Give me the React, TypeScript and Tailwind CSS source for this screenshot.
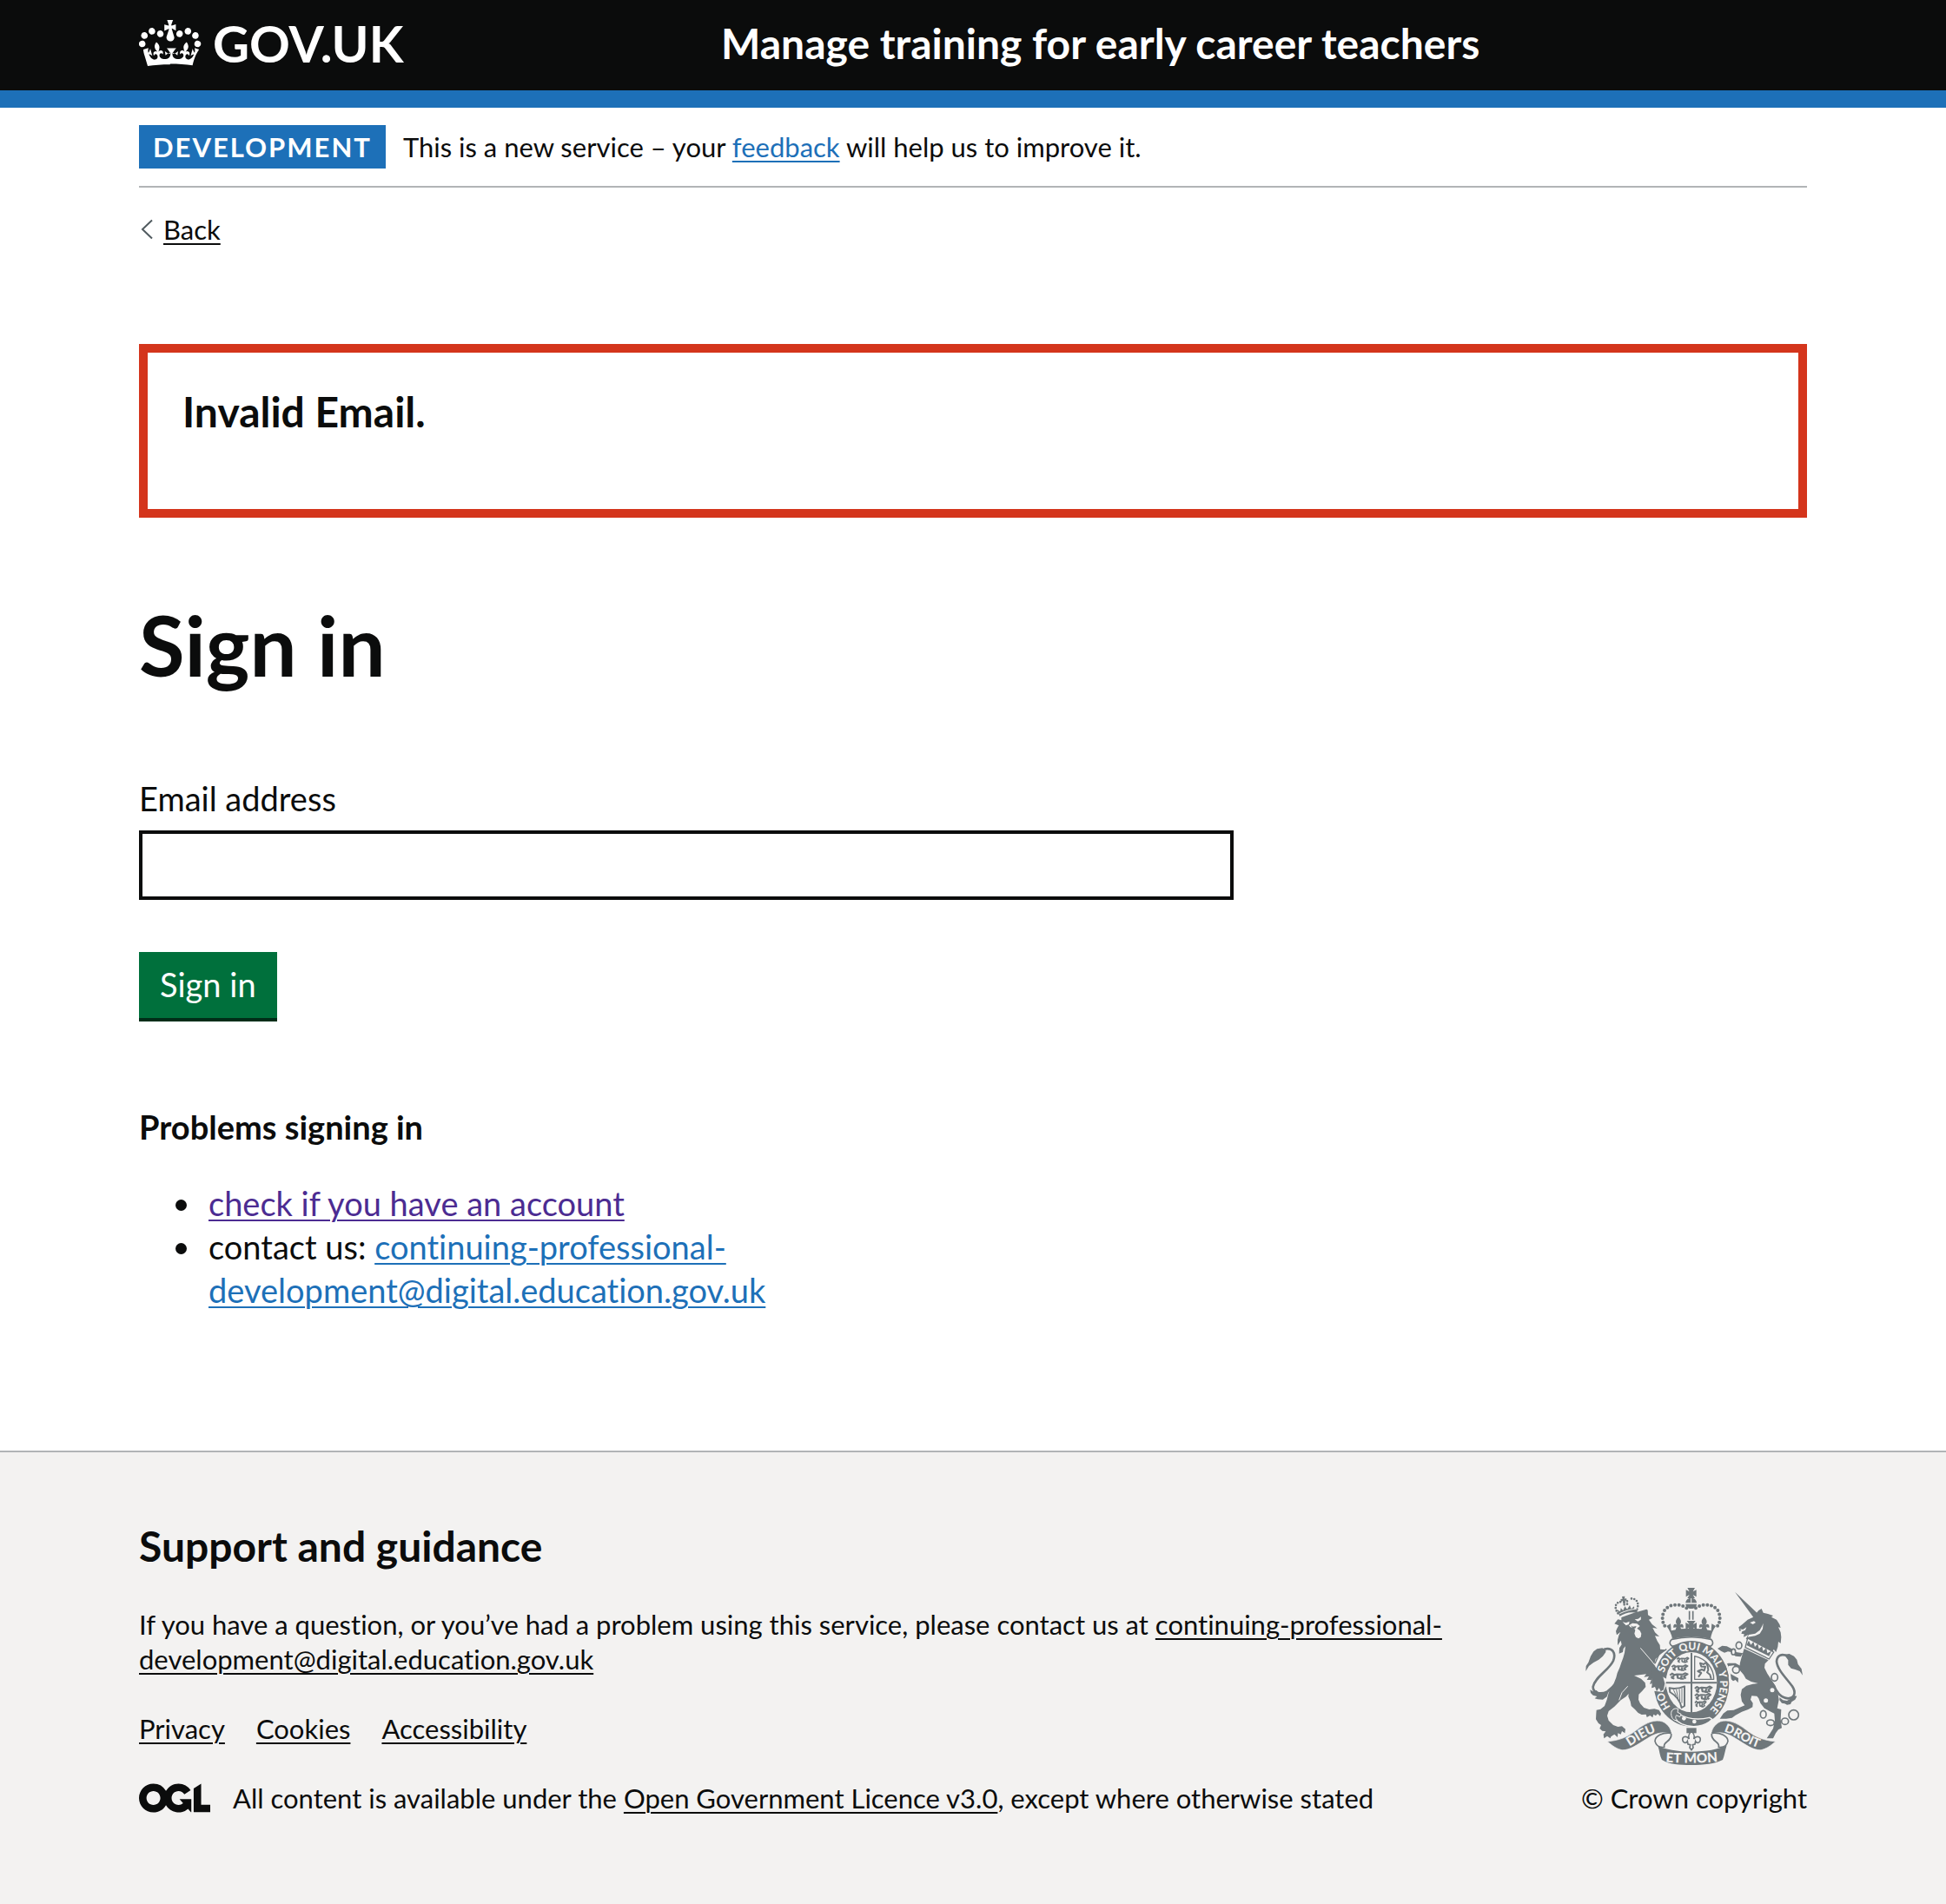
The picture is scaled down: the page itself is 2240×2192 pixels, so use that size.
import type { ReactNode } from "react";

const LINK = "underline decoration-2 underline-offset-4";

function Crown() {
  return (
    <svg aria-hidden="true" className="h-[54px] w-[72px] shrink-0" viewBox="0 4 36 27" fill="currentColor">
      <path d="M6.7 12.2c1 .4 2.1-.1 2.5-1s-.1-2.1-1-2.5c-1-.4-2.1.1-2.5 1-.4 1 0 2.1 1 2.5m-4.3 2.5c1 .4 2.1-.1 2.5-1s-.1-2.1-1-2.5c-1-.4-2.1.1-2.5 1-.5 1 0 2.1 1 2.5m-1.3 4.8c1 .4 2.1-.1 2.5-1 .4-1-.1-2.1-1-2.5-1-.4-2.1.1-2.5 1-.4 1 0 2.1 1 2.5m10.4-5.8c1 .4 2.1-.1 2.5-1s-.1-2.1-1-2.5-2.1.1-2.5 1c-.4 1 .1 2.1 1 2.5m17.4-1.5c-1 .4-2.1-.1-2.5-1s.1-2.1 1-2.5c1-.4 2.1.1 2.5 1s0 2.1-1 2.5m4.3 2.5c-1 .4-2.1-.1-2.5-1s.1-2.1 1-2.5c1-.4 2.1.1 2.5 1s0 2.1-1 2.5m1.3 4.8c-1 .4-2.1-.1-2.5-1s.1-2.1 1-2.5 2.1.1 2.5 1c.4 1 0 2.1-1 2.5m-10.4-5.8c-1 .4-2.1-.1-2.5-1s.1-2.1 1-2.5c1-.4 2.1.1 2.5 1s-.1 2.1-1 2.5m-5.3-4.9 2.4 1.3V6.5l-2.4.8c-.1-.1-.1-.2-.2-.3s1-3 1-3h-3.4s1 2.9 1 3-.2.2-.2.3l-2.4-.7v3.6L17 9.1c.1.1.2.2.3.2l-1.4 4.2c-.1.2-.1.4-.1.6 0 1.1.8 2 1.9 2.2h.7c1-.2 1.9-1.1 1.9-2.1 0-.2 0-.4-.1-.6l-1.3-4.3c-.1-.2 0-.3.1-.4m-1 20.3c4.6 0 8.9.3 12.8.9 1.1-4.6 2.4-7.2 3.8-9.1l-2.6-.9c.3 1.3.3 1.9 0 2.8-.4-.4-.8-1.2-1.1-2.4l-1.2 4.2c.8-.5 1.4-.9 2-.9-1.1 2.5-2.7 3.1-3.5 3-1.1-.2-1.7-1.2-1.5-2.1.3-1.2 1.5-1.5 2.1-.1 1.1-2.3-.8-3-2-2.3 1.9-1.9 2.1-3.5.6-5.6-2.1 1.6-2.1 3.2-1.2 5.5-1.2-1.4-3.2-.6-2.5 1.6.9-1.4 2.1-.5 1.9.8-.2 1.1-1.7 2.1-3.5 1.9-2.7-.2-2.9-2.1-2.9-3.6.7-.1 1.9.5 2.9 1.5l.4-2.4c-1.1 1.1-2.1 1.4-3.2 1.4.4-1.2 2.1-3.1 2.1-3.1h-5.4s1.7 1.9 2.1 3.1c-1.1 0-2.1-.3-3.2-1.4l.4 2.4c1-1 2.2-1.6 2.9-1.5-.1 1.5-.2 3.4-2.9 3.6-1.9.2-3.4-.8-3.5-1.9-.2-1.3 1-2.2 1.9-.8.7-2.3-1.2-3-2.5-1.6.9-2.2.9-3.9-1.2-5.5-1.5 2-1.3 3.7.6 5.6-1.2-.7-3.1 0-2 2.3.6-1.4 1.8-1.1 2.1.1.2.9-.3 1.9-1.5 2.1-.9.2-2.4-.5-3.5-3 .6 0 1.2.3 2 .9l-1.2-4.2c-.3 1.1-.7 1.9-1.1 2.4-.3-.8-.2-1.4 0-2.8l-2.9.9C2.5 23.2 3.8 25.8 5 30.5c3.9-.6 8.1-.9 12.8-.9" />
    </svg>
  );
}

function OglLogo() {
  return (
    <svg role="img" aria-label="Open Government Licence" className="mr-[26px] h-[34px] w-[82px] shrink-0" viewBox="0 0 483.2 195.7" fill="currentColor">
      <path d="M421.5 142.8V.1l-50.7 32.3v161.1h112.4v-50.7zm-122.3-9.6A47.12 47.12 0 0 1 221 97.8c0-26 21.1-47.1 47.1-47.1 16.7 0 31.4 8.7 39.7 21.8l42.7-27.2A97.63 97.63 0 0 0 268.1 0c-36.5 0-68.3 20.1-85.1 49.7A98 98 0 0 0 97.8 0C43.9 0 0 43.9 0 97.8s43.9 97.8 97.8 97.8c36.5 0 68.3-20.1 85.1-49.7a97.76 97.76 0 0 0 149.6 25.4l19.4 22.2h3v-87.8h-80l24.3 27.5zM97.8 145c-26 0-47.1-21.1-47.1-47.1s21.1-47.1 47.1-47.1 47.1 21.1 47.1 47.1S123.8 145 97.8 145" />
    </svg>
  );
}

const PASSANT = "M0 5L5 0l5 4 6-2 13 1 6-4 5 3-5 4-3 3 4 6M9 5l-4 8 5 2M17 5l1 8 6 1M27 6l-2 9 7 0M2 9l4 2";

/* Royal coat of arms: supporters, crown, garter and motto scroll. */
function Crest() {
  const g = "#6f777b";
  const p = "#f3f2f1";
  const words: [string, string][] = [
    ["HO", "16.5%"],
    ["SOIT", "36.5%"],
    ["QUI", "49%"],
    ["MAL", "61%"],
    ["Y", "70.5%"],
    ["PENSE", "81.5%"],
  ];
  return (
    <svg role="img" aria-label="Royal coat of arms" className="h-[204px] w-[250px]" viewBox="72 54 750 612" fill={g}>
      {/* Lion */}
      <path d="M172 178L184 163 196 166 196 156 240 140 283 128 287 131 288 148 304 158 291 164 302 180 320 194 304 192 312 208 327 222 312 220 320 238 329 252 330 266 347 268 330 284 314 300 310 318 328 338 342 358 348 380 342 406 332 412 326 400 316 412 311 396 300 400 304 384 294 386 299 372 284 372 291 360 274 362 282 352 240 357 264 368 278 382 280 396 268 410 256 422 255 440 261 454 274 468 292 474 310 472 326 476 333 488 330 497 321 489 315 496 307 491 304 502 295 495 284 501 281 491 266 492 254 486 243 474 230 462 227 446 220 430 221 420 212 430 194 442 172 464 152 480 147 496 152 512 168 528 184 534 198 532 210 542 208 556 198 549 194 560 184 556 183 570 172 560 160 568 158 574 147 566 136 574 134 560 142 550 130 548 121 540 126 528 117 522 108 508 109 488 110 476 124 473 138 462 146 440 152 416 160 398 170 384 178 364 182 348 190 330 196 312 202 296 207 278 210 256 203 264 201 276 188 281 189 262 197 250 194 236 183 253 183 234 187 218 193 206 180 217 177 204 181 194 187 184Z" />
      <path d="M218 394l-20 22-10 26M262 262L300 306 330 346" stroke={p} strokeWidth="3" fill="none" />
      <path d="M200 172l12 3 12-5-2 10-10 4zM242 163l12-2 10-7-1 10-10 6zM222 184l12-8 16 2 10 8-10 8 10 8 5 10-2 12-8 5-9-5-5-12 3-12-5-8-12-2z" fill={p} />
      <path d="M228 184l8 4 12-2-4 8-8 0z" />
      <path d="M73 342L74 324 82 312 90 290 100 274 112 265 130 262 142 268 142 276 132 290 118 302 100 312 84 324Z" />
      <path d="M136 266C166 258 178 280 168 306 154 338 104 362 98 396 98 418 124 424 148 412L184 380" stroke={g} strokeWidth="8" fill="none" />
      <path d="M88 406l10 6 12-4 12 12 16-2 14-6-6 18-14 10-18-1-10-3 8-7-14-4-8-8z" />
      {/* Lion's crown */}
      <path d="M184 142C168 118 178 102 198 102M250 128C260 102 244 88 226 92M206 102v18M216 100v18" stroke={g} strokeWidth="8" strokeDasharray="0 10" strokeLinecap="round" fill="none" />
      <path d="M198 84l10-1-1 9 6-2 2 9-7-1 2 9-8 2-1-10-6 3-2-9 7-1zM190 152l-8-22 10 6 2-12 8 8 6-14 8 10 9-14 5 13 10-9 1 12 10-6 0 18C230 134 208 142 190 152z" />
      <path d="M190 143C208 134 230 128 250 126" stroke={p} strokeWidth="3" fill="none" />
      {/* Unicorn */}
      <path d="M588 68L672 148 652 156Z" />
      <path d="M670 132L680 126 686 140 702 144 720 150 714 155 732 164 742 180 746 192 738 190 746 208 748 224 746 246 738 240 736 258 730 276 722 266 716 282 626 230 634 216 618 224 620 214 610 212 616 198 604 204 601 190 614 180 632 164 650 156Z" />
      <path d="M640 174l14-5 6 5-10 6zM686 176l-2 20-10 16-16 8-26 4 4-8 22-4 16-12 8-14z" fill={p} />
      <path d="M604 196l12 2 12-8-4 10-10 4z" fill={p} />
      <path d="M632 228L722 276 706 300 624 260Z" fill={p} stroke={g} strokeWidth="4" />
      <path d="M628 252L636 236 643 251 652 240 657 258 667 247 671 265 682 255 685 272 697 262 700 280 714 272 706 290Z" />
      <path d="M620 264L704 304 692 316 690 330 700 350 716 374 728 392 736 416 740 440 734 470 748 474 746 508 750 538 738 544 729 556 720 574 698 574 710 556 720 540 726 512 724 488 708 480 690 470 676 452 670 436 664 428 646 427 642 440 650 452 649 466 634 474 612 482 590 494 578 503 558 506 536 506 548 488 562 478 584 476 622 460 612 446 608 424 612 404 628 392 650 386 668 384 644 378 626 368 618 354 608 342 604 328 606 312 612 290Z" />
      <path d="M608 292L590 290 576 276 564 274 552 278 540 272 528 264 544 254 560 256 576 264 592 276 616 280ZM612 344L598 332 584 322 566 324 562 338 574 352 600 366 599 382 590 372 582 376 562 358 546 338 550 320 566 314 590 314 612 326Z" />
      <path d="M716 384C734 412 742 434 772 436 798 434 798 412 786 394 764 364 734 336 732 308 734 286 750 280 770 290" stroke={g} strokeWidth="8" fill="none" />
      <path d="M758 284L776 282 792 290 802 302 806 318 818 334 822 356 812 342 796 336 782 332 772 320 772 304ZM742 432l12 10 14 2 10-6 12-12 12 2-6 12-12 8-4 8-12 2-8-4-10-2-8-10z" />
      <g fill={p} stroke={g} strokeWidth="5">
        <ellipse cx="602" cy="253" rx="10" ry="12" />
        <ellipse cx="583" cy="275" rx="7" ry="10" />
        <ellipse cx="592" cy="337" rx="12" ry="12" />
        <ellipse cx="725" cy="363" rx="11" ry="13" />
        <ellipse cx="717" cy="407" rx="10" ry="10" />
        <ellipse cx="695" cy="443" rx="10" ry="10" />
        <ellipse cx="686" cy="491" rx="10" ry="13" />
        <ellipse cx="711" cy="520" rx="13" ry="10" />
        <ellipse cx="761" cy="515" rx="12" ry="11" />
        <circle cx="791" cy="493" r="17" />
      </g>
      {/* Crown */}
      <path d="M424 54h26l-7 13 12-6v24l-12-7 7 12h-26l7-12-12 7V61l12 6zM418 106c0-10 8-17 19-17s19 7 19 17z" />
      <path d="M418 110h38c0 10-8 16-19 16s-19-6-19-16z" />
      <path d="M437 90v16" stroke={p} strokeWidth="3" />
      <path d="M421 124C396 106 358 110 344 134 334 154 336 176 352 194M453 124C478 106 516 110 530 134 540 154 538 176 522 194" stroke={g} strokeWidth="12" strokeDasharray="0 14" strokeLinecap="round" fill="none" />
      <path d="M431 134v30M443 134v30" stroke={g} strokeWidth="5" />
      <path d="M422 168h30l-9 13 13-7v24l-12-7 6 12h-26l6-12-12 7v-24l13 7zM393 154c12 14 10 20 5 28 8-6 14 0 12 10l-10-2 4 12h-22l4-12-10 2c-2-10 4-16 12-10-5-8-7-14 5-28zM482 154c12 14 10 20 5 28 8-6 14 0 12 10l-10-2 4 12h-22l4-12-10 2c-2-10 4-16 12-10-5-8-7-14 5-28z" />
      <path d="M352 186l14-8 2 24c46-10 92-10 138 0l2-24 14 8c-10 14-16 30-18 44-44-10-88-10-132 0-2-14-10-30-20-44z" />
      <path d="M370 232C360 240 362 250 372 256 414 242 462 242 504 256 514 250 514 240 506 232 462 222 414 222 370 232Z" fill={p} stroke={g} strokeWidth="5" />
      {/* Garter */}
      <path d="M370 262C326 288 304 334 306 392M506 262C550 288 574 334 572 392" stroke={p} strokeWidth="8" fill="none" />
      <path d="M352 266L326 284 312 316" stroke={g} strokeWidth="4" fill="none" />
      <ellipse cx="438" cy="385" rx="130" ry="148" />
      <ellipse cx="438" cy="380" rx="88" ry="104" fill={p} />
      <path id="garter-line" d="M438 502A99 117 0 0 1 438 268A99 117 0 0 1 438 502" fill="none" />
      <g fill={p} fontFamily="Lato, sans-serif" fontWeight="900" fontSize="36" textAnchor="middle">
        {words.map(([word, at]) => (
          <text key={word}>
            <textPath href="#garter-line" startOffset={at}>{word}</textPath>
          </text>
        ))}
      </g>
      <path d="M302 388l30-30 20 10-2 26-10 20-32-4z" fill={p} />
      <path d="M300 312L312 324 326 344 340 362 346 384 342 406 332 412 326 400 318 412 312 396 302 400Z" />
      {/* Shield quarters */}
      <path d="M350 382h176M438 278v208" stroke={g} strokeWidth="6" fill="none" />
      <g fill="none" stroke={g} strokeWidth="5" strokeLinejoin="round">
        <path d={PASSANT} transform="translate(388 296)" />
        <path d={PASSANT} transform="translate(370 322) scale(1.35 1.1)" />
        <path d={PASSANT} transform="translate(364 350) scale(1.5 1.2)" />
        <path d={PASSANT} transform="translate(450 396) scale(1.45 1.2)" />
        <path d={PASSANT} transform="translate(450 421) scale(1.35 1.2)" />
        <path d={PASSANT} transform="translate(450 446) scale(.95 1.2)" />
        <path d="M449 290v80h66C516 336 492 300 449 290z" strokeWidth="4" />
        <path d="M462 362l10-14-12-6 14-6 8 4 4-14-14 0-4-12 12 4 8-6 6 12 2 14-4 8 10 8 4 14" strokeWidth="6" />
        <path d="M362 400c16 4 34 2 52-6v68l-10 6c-4-22-20-42-40-54z" strokeWidth="6" />
        <path d="M376 406l10 22M386 405l6 32M396 403l2 42M405 400v52" strokeWidth="3" />
      </g>
      {/* Buckle and belt end */}
      <path d="M388 486C420 506 460 512 500 502L510 508C484 534 440 540 404 524L376 506Z" stroke={p} strokeWidth="4" />
      <circle cx="412" cy="505" r="7" fill={p} />
      <circle cx="448" cy="516" r="7" fill={p} />
      <path d="M392 472c-14-4-24 4-24 16s6 26 22 24c-8-6-8-12-4-18l12 6 4-10-12-6z" stroke={p} strokeWidth="3" />
      {/* Motto scroll */}
      <path d="M148 585C190 580 214 572 250 544 284 518 312 508 338 516 360 526 368 544 370 560 350 550 318 552 286 574 250 596 224 616 198 614 180 610 168 602 148 585Z" stroke={p} strokeWidth="2" />
      <path d="M728 585C686 580 662 572 626 544 592 518 564 508 538 516 516 526 508 544 506 560 526 550 558 552 590 574 626 596 652 616 678 614 696 610 708 602 728 585Z" stroke={p} strokeWidth="2" />
      <path d="M368 556C338 552 312 566 312 584 316 600 328 606 344 604 338 584 372 586 368 558M508 556C538 552 564 566 564 584 560 600 548 606 532 604 538 584 504 586 508 558" stroke={g} strokeWidth="5" fill={p} />
      <path d="M322 600C346 612 390 620 438 620S534 612 560 598C554 616 552 634 546 648 520 662 480 666 438 666S360 664 336 648C328 634 328 616 322 600Z" />
      <path id="motto-left" d="M212 607C242 594 272 564 330 548" fill="none" />
      <path id="motto-centre" d="M330 654Q438 664 548 652" fill="none" />
      <path id="motto-right" d="M546 550C592 560 620 592 672 607" fill="none" />
      <g fill={p} fontFamily="Lato, sans-serif" fontWeight="900" textAnchor="middle">
        <text fontSize="44"><textPath href="#motto-left" startOffset="50%">DIEU</textPath></text>
        <text fontSize="46"><textPath href="#motto-centre" startOffset="50%">ET MON</textPath></text>
        <text fontSize="42"><textPath href="#motto-right" startOffset="50%">DROIT</textPath></text>
      </g>
      <path d="M421 538h34v18h-34z" />
      <path d="M438 548c10 12 12 18 8 28 10-14 26-8 22 6-2 8-12 10-16 2l-2 10-8 2 2 10-6 8-6-8 2-10-8-2-2-10c-4 8-14 6-16-2-4-14 12-20 22-6-4-10-2-16 8-28z" fill={p} stroke={g} strokeWidth="5" />
    </svg>
  );
}

function FooterLink({ children }: { children: ReactNode }) {
  return <a href="#" className={LINK}>{children}</a>;
}

export default function App() {
  return (
    <div className="flex min-h-screen flex-col bg-white font-['Lato',sans-serif] text-[31px] leading-10 text-[#0b0c0c] [font-variant-ligatures:none]">
      <header className="border-b-20 border-[#1d70b8] bg-[#0b0c0c] px-40 text-white">
        <div className="flex items-center pt-[23px] pb-[27px]">
          <div className="mr-[30px] w-1/3">
            <a href="#" className="flex items-center gap-[13px] text-[58px] leading-10 font-bold">
              <Crown />
              GOV.UK
            </a>
          </div>
          <a href="#" className="text-5xl leading-10 font-bold">Manage training for early career teachers</a>
        </div>
      </header>

      <div className="px-40">
        <div className="flex items-center gap-5 border-b-2 border-[#b1b4b6] py-5 leading-[50px]">
          <strong className="bg-[#1d70b8] px-4 font-bold tracking-[2px] text-white">DEVELOPMENT</strong>
          <p>
            This is a new service – your <a href="#" className={`${LINK} text-[#1d70b8]`}>feedback</a> will help us to improve it.
          </p>
        </div>
        <a href="#" className="mt-7 flex w-fit items-center">
          <svg aria-hidden="true" className="mr-2 h-6 w-5" viewBox="0 0 20 24" fill="none" stroke="#505a5f" strokeWidth="2">
            <path d="M15 1.500L4 12l11 10.500" />
          </svg>
          <span className={LINK}>Back</span>
        </a>
      </div>

      <main className="px-40 pt-28 pb-40 text-[38px] leading-[50px]">
        <div role="alert" className="border-10 border-[#d4351c] p-10">
          <h2 className="mb-11 text-5xl leading-14 font-bold">Invalid Email.</h2>
        </div>
        <h1 className="mt-24 text-8xl leading-[100px] font-bold">Sign in</h1>
        <form className="mt-[102px] w-2/3 pr-5">
          <label htmlFor="email" className="block">Email address</label>
          <input id="email" type="email" className="mt-3 block h-20 w-full border-4 border-[#0b0c0c] px-2" />
          <button type="button" className="mt-15 block bg-[#00703c] px-6 pt-3 pb-3.5 text-white shadow-[0_4px_0_#002d18]">Sign in</button>
        </form>
        <section className="mt-25 w-1/2 pr-8">
          <h3 className="font-bold">Problems signing in</h3>
          <ul className="mt-[38px] list-disc pl-[74px]">
            <li className="pl-1.5"><a href="#" className={`${LINK} text-[#4c2c92]`}>check if you have an account</a></li>
            <li className="pl-1.5">contact us: <a href="#" className={`${LINK} text-[#1d70b8]`}>continuing-professional-<wbr />development@digital.education.gov.uk</a></li>
          </ul>
        </section>
      </main>

      <footer className="grow border-t-2 border-[#b1b4b6] bg-[#f3f2f1] px-40 pt-[78px] pb-25">
        <div className="flex items-end justify-between gap-15">
          <div className="min-w-0 flex-1">
            <h2 className="text-5xl leading-15 font-bold">Support and guidance</h2>
            <p className="mt-10">
              If you have a question, or you’ve had a problem using this service, please contact us at{" "}
              <FooterLink>continuing-professional-<wbr />development@digital.education.gov.uk</FooterLink>
            </p>
            <ul className="mt-10 flex gap-9">
              <li><FooterLink>Privacy</FooterLink></li>
              <li><FooterLink>Cookies</FooterLink></li>
              <li><FooterLink>Accessibility</FooterLink></li>
            </ul>
            <div className="mt-10 flex items-center">
              <OglLogo />
              <p>
                All content is available under the <FooterLink>Open Government Licence v3.0</FooterLink>, except where otherwise stated
              </p>
            </div>
          </div>
          <div className="flex flex-col items-center gap-[18px]">
            <Crest />
            <p className="whitespace-nowrap">© Crown copyright</p>
          </div>
        </div>
      </footer>
    </div>
  );
}
